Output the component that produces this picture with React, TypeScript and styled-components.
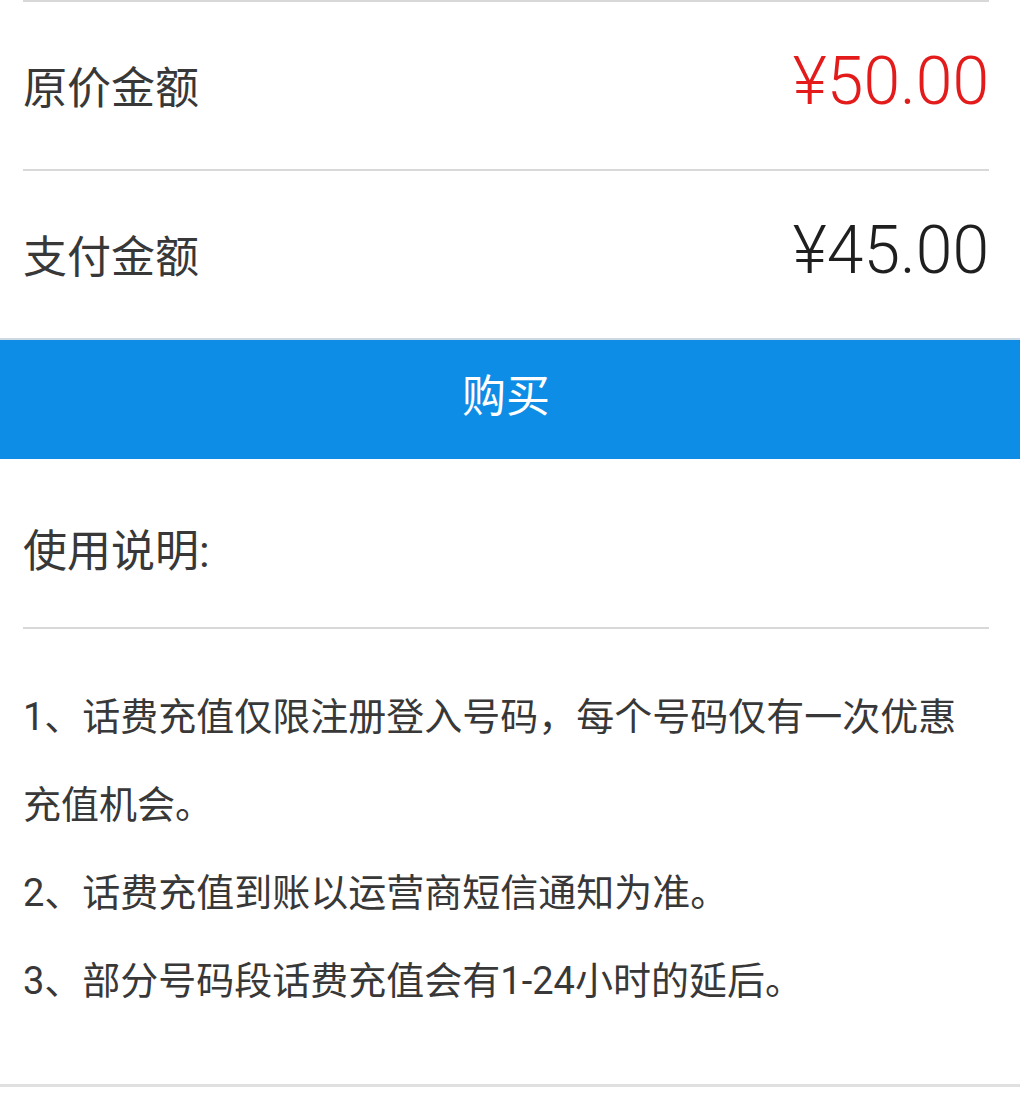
import React from "react";
import styled, { createGlobalStyle } from "styled-components";

const GlobalStyle = createGlobalStyle`
  html, body {
    margin: 0;
    padding: 0;
    background: #ffffff;
  }
  body {
    font-family: Roboto, "Noto Sans CJK SC", "Noto Sans", sans-serif;
    color: #383838;
  }
  * { box-sizing: border-box; }
`;

const Page = styled.div`
  width: 1020px;
  min-height: 1103px;
  background: #ffffff;
  display: flex;
  flex-direction: column;
`;

const Divider = styled.div<{ $full?: boolean; $thick?: number; $color?: string }>`
  height: ${(p) => p.$thick ?? 2}px;
  background: ${(p) => p.$color ?? "#d8d8d8"};
  margin: ${(p) => (p.$full ? "0" : "0 31px 0 23px")};
`;

const Row = styled.div`
  height: 167px;
  padding: 47px 31px 0 23px;
  display: flex;
  justify-content: space-between;
  align-items: baseline;
`;

const Label = styled.span`
  font-size: 44px;
  line-height: 44px;
  color: #383838;
`;

const Price = styled.span<{ $red?: boolean }>`
  font-size: 66px;
  line-height: 66px;
  font-weight: 300;
  font-family: Roboto, "Liberation Sans", sans-serif;
  color: ${(p) => (p.$red ? "#e31b1b" : "#1f1f1f")};
`;

const BuyButton = styled.button`
  display: flex;
  align-items: center;
  justify-content: center;
  width: 100%;
  height: 121px;
  margin: 0;
  padding: 0 31px 6px 23px;
  border: none;
  border-top: 2px solid #cdd9e2;
  background: #0e8de6;
  color: #ffffff;
  font-family: Roboto, "Noto Sans CJK SC", sans-serif;
  font-size: 44px;
  line-height: 44px;
  cursor: pointer;
`;

const SectionTitle = styled.div`
  padding: 71px 31px 53px 23px;
  font-size: 44px;
  line-height: 44px;
  color: #383838;
`;

const Notes = styled.div`
  padding: 44px 31px 59px 23px;
  font-size: 38px;
  line-height: 88px;
  color: #383838;
`;

const Note = styled.p`
  margin: 0;
`;

const notes = [
  "1、话费充值仅限注册登入号码，每个号码仅有一次优惠充值机会。",
  "2、话费充值到账以运营商短信通知为准。",
  "3、部分号码段话费充值会有1-24小时的延后。",
];

export default function App() {
  return (
    <>
      <GlobalStyle />
      <Page>
        <Divider />
        <Row>
          <Label>原价金额</Label>
          <Price $red>¥50.00</Price>
        </Row>
        <Divider />
        <Row>
          <Label>支付金额</Label>
          <Price>¥45.00</Price>
        </Row>
        <BuyButton type="button">购买</BuyButton>
        <SectionTitle>使用说明:</SectionTitle>
        <Divider />
        <Notes>
          {notes.map((n) => (
            <Note key={n}>{n}</Note>
          ))}
        </Notes>
        <Divider $full $thick={3} $color="#e0e0e0" />
      </Page>
    </>
  );
}
